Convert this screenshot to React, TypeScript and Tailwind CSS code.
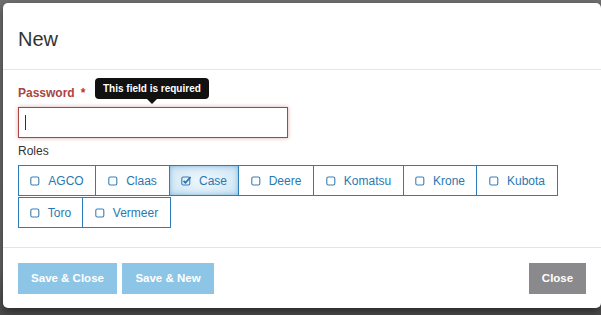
import { ReactNode } from "react";

const roleRows: { name: string; w: string; checked?: boolean }[][] = [
  [
    { name: "AGCO", w: "w-[78px]" },
    { name: "Claas", w: "w-[75px]" },
    { name: "Case", w: "w-[70px]", checked: true },
    { name: "Deere", w: "w-[76px]" },
    { name: "Komatsu", w: "w-[91px]" },
    { name: "Krone", w: "w-[74px]" },
    { name: "Kubota", w: "w-[82px]" },
  ],
  [
    { name: "Toro", w: "w-[65px]" },
    { name: "Vermeer", w: "w-[89px]" },
  ],
];

function CheckIcon({ checked }: { checked?: boolean }) {
  return (
    <svg width="10" height="10" viewBox="0 0 10 10" className="shrink-0">
      <rect
        x="0.8"
        y="1"
        width="8"
        height="8"
        rx="1.5"
        fill="none"
        stroke="#3a7fb5"
        strokeWidth="1.1"
      />
      {checked && (
        <path
          d="M2.6 4.8 L4.5 6.8 L9.6 1"
          fill="none"
          stroke="#2a6fa6"
          strokeWidth="1.7"
        />
      )}
    </svg>
  );
}

function RoleButton({
  name,
  w,
  checked,
  first,
}: {
  name: string;
  w: string;
  checked?: boolean;
  first: boolean;
}) {
  return (
    <div
      className={`${w} ${first ? "" : "-ml-px"} flex h-[31px] items-center justify-center gap-[8px] border border-[#2a7db8] text-[12px] text-[#2a78b0] ${
        checked
          ? "bg-[radial-gradient(ellipse_at_center,#f0f8fd_0%,#c9e3f3_100%)] shadow-[inset_0_0_5px_rgba(42,125,184,0.45)]"
          : "bg-white"
      }`}
    >
      <CheckIcon checked={checked} />
      <span>{name}</span>
    </div>
  );
}

function FooterButton({
  children,
  className,
}: {
  children: ReactNode;
  className: string;
}) {
  return (
    <div
      className={`flex h-[31px] items-center justify-center text-[11.5px] font-bold text-white ${className}`}
    >
      {children}
    </div>
  );
}

export default function App() {
  return (
    <div className="h-[315px] w-[601px] overflow-hidden bg-[linear-gradient(#707070,#666666_85%,#4a4a4a)] pl-[3px] pt-[3px] font-['Liberation_Sans',Arial,sans-serif]">
      <div className="flex h-[305px] w-[598px] flex-col rounded-[5px] bg-white shadow-[0_3px_8px_rgba(0,0,0,0.5)]">
        <div className="flex h-[67px] items-center border-b border-[#e5e5e5] pl-[15px] pt-[6px]">
          <h4 className="text-[20px] leading-none text-[#333]">New</h4>
        </div>

        <div className="relative flex-1 px-[15px] pt-[15px]">
          <div className="flex h-[16px] items-center text-[12px] font-bold text-[#a94442]">
            Password <span className="ml-[6px] text-[#c9302c]">*</span>
          </div>

          <div className="absolute left-[92px] top-[8px] flex flex-col items-center">
            <div className="flex h-[21px] items-center rounded-[4px] bg-[#111] px-[8px] text-[10px] font-bold text-white">
              This field is required
            </div>
            <div className="h-0 w-0 border-x-[5px] border-t-[5px] border-x-transparent border-t-[#111]" />
          </div>

          <div className="mt-[6px] flex h-[31px] w-[270px] items-center border border-[#a94442] pl-[6px] shadow-[0_0_4px_rgba(169,68,66,0.45)]">
            <div className="h-[15px] w-px bg-[#333]" />
          </div>

          <div className="mt-[6px] text-[12px] leading-[14px] text-[#333]">
            Roles
          </div>

          <div className="mt-[7px] flex flex-col gap-px">
            {roleRows.map((row, ri) => (
              <div key={ri} className="flex">
                {row.map((r, i) => (
                  <RoleButton
                    key={r.name}
                    name={r.name}
                    w={r.w}
                    checked={r.checked}
                    first={i === 0}
                  />
                ))}
              </div>
            ))}
          </div>
        </div>

        <div className="flex h-[61px] items-start border-t border-[#e5e5e5] pl-[15px] pr-[15px] pt-[15px]">
          <FooterButton className="w-[99px] bg-[#8cc5e6]">
            Save &amp; Close
          </FooterButton>
          <FooterButton className="ml-[5px] w-[92px] bg-[#8cc5e6]">
            Save &amp; New
          </FooterButton>
          <div className="flex-1" />
          <FooterButton className="w-[57px] bg-[#8a8a8c]">Close</FooterButton>
        </div>
      </div>
    </div>
  );
}
